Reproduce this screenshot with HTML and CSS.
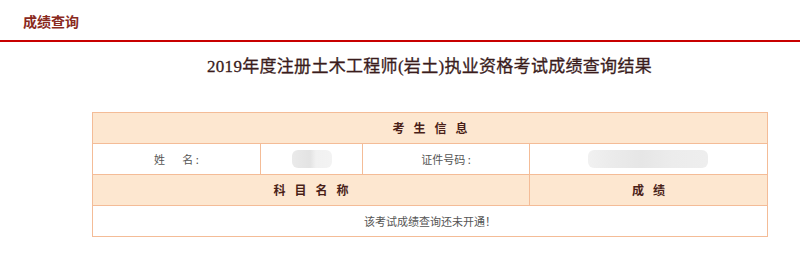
FILE: index.html
```html
<!DOCTYPE html>
<html lang="zh-CN">
<head>
<meta charset="utf-8">
<title>成绩查询</title>
<link rel="stylesheet" href="styles.css">
</head>
<body>
<div class="topbar"><span class="topbar-title">成绩查询</span></div>
<div class="main">
  <h1 class="page-title">2019年度注册土木工程师(岩土)执业资格考试成绩查询结果</h1>
  <table class="result">
    <colgroup>
      <col class="c1"><col class="c2"><col class="c3"><col class="c4">
    </colgroup>
    <tr class="head"><th colspan="4"><span class="spaced">考生信息</span></th></tr>
    <tr>
      <td>姓&nbsp;&nbsp;&nbsp;&nbsp;&nbsp;&nbsp;&nbsp;名&nbsp;:</td>
      <td><span class="blur blur-name"></span></td>
      <td>证件号码&nbsp;:</td>
      <td><span class="blur blur-id"></span></td>
    </tr>
    <tr class="head">
      <th colspan="3"><span class="spaced">科目名称</span></th>
      <th><span class="spaced">成绩</span></th>
    </tr>
    <tr><td colspan="4">该考试成绩查询还未开通！</td></tr>
  </table>
</div>
</body>
</html>
```
FILE: styles.css
```css
html, body {
  margin: 0;
  padding: 0;
  background: #fff;
  font-family: "Noto Sans CJK SC", "Liberation Sans", sans-serif;
}
.topbar {
  height: 40px;
  border-bottom: 2px solid #c80000;
  box-sizing: content-box;
  display: flex;
  align-items: center;
  padding-left: 23px;
}
.topbar-title {
  font-size: 14px;
  font-weight: bold;
  color: #8a2a1e;
  margin-top: 2px;
}
.main {
  width: 675px;
  margin-left: 92px;
}
.page-title {
  margin: 0;
  padding-top: 15px;
  height: 55px;
  text-align: center;
  font-family: "Liberation Serif", "Noto Sans CJK SC", serif;
  font-size: 17px;
  font-weight: normal;
  color: #3a1c1c;
  line-height: 20px;
  letter-spacing: 0.3px;
  -webkit-text-stroke: 0.3px #3a1c1c;
}
.result {
  width: 675px;
  border-collapse: collapse;
  table-layout: fixed;
}
.c1 { width: 168px; }
.c2 { width: 102px; }
.c3 { width: 167px; }
.c4 { width: 238px; }
.result th, .result td {
  border: 1px solid #f4bc97;
  height: 30px;
  padding: 0;
  text-align: center;
  font-size: 11px;
  color: #555;
  line-height: 14px;
}
.result th {
  background: #fde7d0;
  color: #4a1f18;
  font-weight: bold;
  font-size: 12px;
}
.spaced {
  letter-spacing: 9px;
  margin-right: -9px;
}
.blur {
  display: inline-block;
  height: 18px;
  vertical-align: middle;
  border-radius: 6px;
  background: linear-gradient(90deg, #eaeaea 0%, #e3e3e3 45%, #f1f1f1 60%, #f3f3f3 100%);
  filter: blur(0.6px);
}
.blur-name { width: 40px; margin-left: 0; }
.blur-id {
  width: 120px;
  margin-left: -2px;
  background: linear-gradient(90deg, #f1f1f1 0%, #ebebeb 20%, #e6e6e6 45%, #ececec 70%, #eeeeee 100%);
}
```
